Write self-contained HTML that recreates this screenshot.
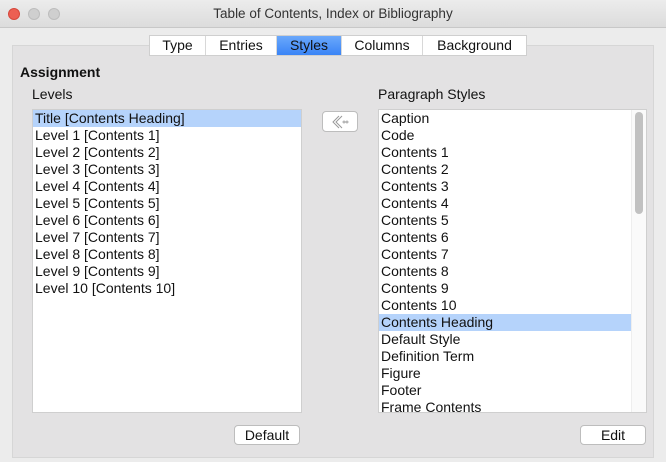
<!DOCTYPE html>
<html><head><style>
*{margin:0;padding:0;box-sizing:border-box}
body{width:666px;height:462px;overflow:hidden;background:#ececec;font-family:"Liberation Sans",sans-serif;font-size:14px;color:#111;position:relative}
.abs{position:absolute}
.title{left:0;top:0;width:666px;height:28px;background:linear-gradient(#ececec,#dcdcdc);border-bottom:1px solid #c8c8c8;text-align:center;line-height:27px;font-size:13.5px;color:#333}
.dot{width:12px;height:12px;border-radius:50%;top:8px;background:#cfcfcf;border:1px solid #bdbdbd}
.panel{left:12px;top:45px;width:642px;height:413px;background:#e3e2e3;border:1px solid #d6d6d6}
.tabs{left:149px;top:35px;height:21px;display:flex;background:#fff;border:1px solid #cfcfcf}
.tabs div{height:19px;line-height:19px;text-align:center;border-right:1px solid #d8d8d8}
.list{background:#fff;border:1px solid #cfcfcf}
.row{height:17px;line-height:17px;padding-left:2px;white-space:nowrap}
.sel{background:#b5d3fb}
.btn{background:#fff;border:1px solid #bdbdbd;border-radius:4px;text-align:center;line-height:18px;height:20px}
</style></head><body>
<div class="abs title">Table of Contents, Index or Bibliography</div>
<div class="abs dot" style="left:8px;background:#ec5f53;border-color:#d6483c"></div>
<div class="abs dot" style="left:28px"></div>
<div class="abs dot" style="left:48px"></div>
<div class="abs panel"></div>
<div class="abs tabs">
<div style="width:56px">Type</div><div style="width:71px">Entries</div><div style="width:65px;background:linear-gradient(#6aa8fb,#3a84f6);color:#111">Styles</div><div style="width:81px">Columns</div><div style="width:103px;border-right:none">Background</div>
</div>
<div class="abs" style="left:20px;top:64px;font-weight:bold">Assignment</div>
<div class="abs" style="left:32px;top:86px">Levels</div>
<div class="abs" style="left:378px;top:86px">Paragraph Styles</div>
<div class="abs list" style="left:32px;top:109px;width:270px;height:304px;padding-top:0">
<div class="row sel">Title [Contents Heading]</div>
<div class="row">Level 1 [Contents 1]</div><div class="row">Level 2 [Contents 2]</div><div class="row">Level 3 [Contents 3]</div><div class="row">Level 4 [Contents 4]</div><div class="row">Level 5 [Contents 5]</div><div class="row">Level 6 [Contents 6]</div><div class="row">Level 7 [Contents 7]</div><div class="row">Level 8 [Contents 8]</div><div class="row">Level 9 [Contents 9]</div><div class="row">Level 10 [Contents 10]</div>
</div>
<div class="abs btn" style="left:322px;top:111px;width:36px;height:21px">
<svg width="34" height="19" viewBox="0 0 34 19"><path d="M19 4 L13 10 L19 16 M16 4 L10 10 L16 16" fill="none" stroke="#999" stroke-width="1"/><circle cx="21" cy="10" r="1" fill="none" stroke="#999" stroke-width=".8"/><circle cx="24" cy="10" r="1" fill="none" stroke="#999" stroke-width=".8"/></svg>
</div>
<div class="abs list" style="left:378px;top:109px;width:269px;height:304px;overflow:hidden">
<div style="width:253px">
<div class="row">Caption</div><div class="row">Code</div><div class="row">Contents 1</div><div class="row">Contents 2</div><div class="row">Contents 3</div><div class="row">Contents 4</div><div class="row">Contents 5</div><div class="row">Contents 6</div><div class="row">Contents 7</div><div class="row">Contents 8</div><div class="row">Contents 9</div><div class="row">Contents 10</div><div class="row sel">Contents Heading</div><div class="row">Default Style</div><div class="row">Definition Term</div><div class="row">Figure</div><div class="row">Footer</div><div class="row">Frame Contents</div>
</div>
<div class="abs" style="left:252px;top:0;width:16px;height:302px;background:#fafafa;border-left:1px solid #eee"></div>
<div class="abs" style="left:256px;top:2px;width:8px;height:102px;background:#c1c1c1;border-radius:4px"></div>
</div>
<div class="abs btn" style="left:234px;top:425px;width:66px">Default</div>
<div class="abs btn" style="left:580px;top:425px;width:66px">Edit</div>
</body></html>
